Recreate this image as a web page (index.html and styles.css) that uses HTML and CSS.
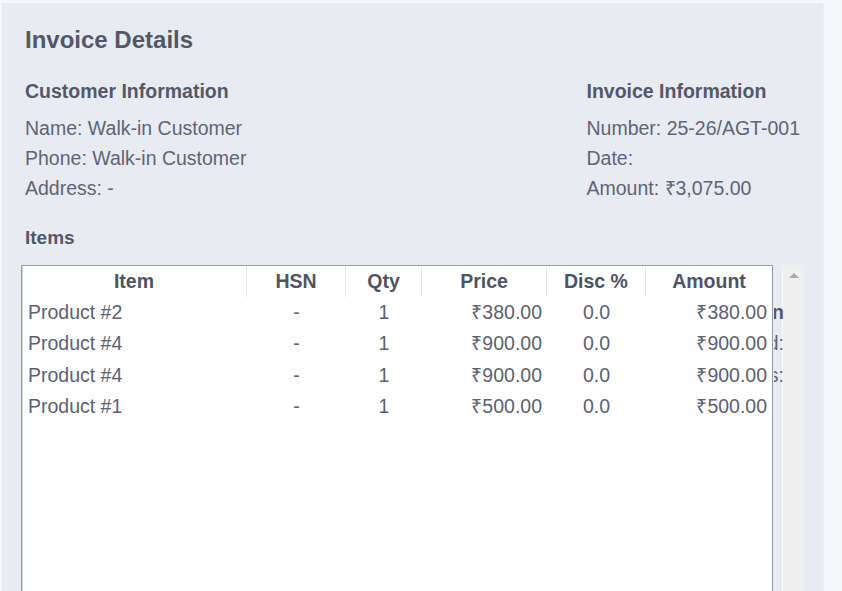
FILE: index.html
```html
<!DOCTYPE html>
<html>
<head>
<meta charset="utf-8">
<link rel="stylesheet" href="styles.css">
</head>
<body>
<div class="panel">
  <h1 class="title">Invoice Details</h1>
  <div class="info">
    <div class="col">
      <h2 class="sub">Customer Information</h2>
      <div class="line">Name: Walk-in Customer</div>
      <div class="line">Phone: Walk-in Customer</div>
      <div class="line">Address: -</div>
    </div>
    <div class="col">
      <h2 class="sub">Invoice Information</h2>
      <div class="line">Number: 25-26/AGT-001</div>
      <div class="line">Date:</div>
      <div class="line">Amount: ₹3,075.00</div>
    </div>
  </div>
  <h3 class="items-label">Items</h3>
  <div class="table-area">
    <div class="spill">
      <div class="spill-line bold"><span>Information</span></div>
      <div class="spill-line"><span>Paid:</span></div>
      <div class="spill-line"><span>Status:</span></div>
    </div>
    <div class="frame">
      <table class="grid">
        <colgroup>
          <col class="c-item"><col class="c-hsn"><col class="c-qty"><col class="c-price"><col class="c-disc"><col class="c-amt">
        </colgroup>
        <thead>
          <tr><th>Item</th><th>HSN</th><th>Qty</th><th>Price</th><th>Disc %</th><th class="last">Amount</th></tr>
        </thead>
        <tbody>
          <tr><td class="l">Product #2</td><td class="c">-</td><td class="c">1</td><td class="r">₹380.00</td><td class="c">0.0</td><td class="r">₹380.00</td></tr>
          <tr><td class="l">Product #4</td><td class="c">-</td><td class="c">1</td><td class="r">₹900.00</td><td class="c">0.0</td><td class="r">₹900.00</td></tr>
          <tr><td class="l">Product #4</td><td class="c">-</td><td class="c">1</td><td class="r">₹900.00</td><td class="c">0.0</td><td class="r">₹900.00</td></tr>
          <tr><td class="l">Product #1</td><td class="c">-</td><td class="c">1</td><td class="r">₹500.00</td><td class="c">0.0</td><td class="r">₹500.00</td></tr>
        </tbody>
      </table>
    </div>
    <div class="scrollbar">
      <svg class="arrow" width="10" height="7" viewBox="0 0 10 7"><polygon points="0,6 5,1 10,6" fill="#a9a9ad"/></svg>
    </div>
  </div>
</div>
</body>
</html>
```
FILE: styles.css
```css
html, body {
  margin: 0;
  padding: 0;
  height: 100%;
  overflow: hidden;
}
body {
  background: #f6f7fb;
  font-family: "Liberation Sans", Arial, sans-serif;
  color: #5f6476;
}
.panel {
  margin: 3px 0 0 2px;
  width: 822px;
  height: 600px;
  box-sizing: border-box;
  background: #e8ebf2;
  border-right: 1px solid #eef0f5;
  padding: 22px 19px 0 19px;
  overflow: hidden;
}
.title {
  margin: 0 0 21px 4px;
  font-size: 24px;
  line-height: 30px;
  font-weight: bold;
  color: #525767;
}
.info {
  display: flex;
  justify-content: space-between;
  padding-left: 4px;
  padding-right: 4px;
}
.sub {
  margin: 0 0 7px 0;
  font-size: 19.5px;
  line-height: 30px;
  font-weight: bold;
  color: #535869;
}
.line {
  font-size: 19.5px;
  line-height: 30px;
}
.items-label {
  margin: 20px 0 12px 4px;
  font-size: 19px;
  line-height: 30px;
  font-weight: bold;
  color: #535869;
}
.table-area {
  position: relative;
  display: flex;
  height: 400px;
}
.frame {
  position: relative;
  z-index: 1;
  width: 753px;
  box-sizing: border-box;
  background: #fff;
  border: 1px solid #9a9ca5;
  border-bottom: none;
  box-shadow: inset 1px 0 0 #d4d5da;
}
.grid {
  width: 100%;
  table-layout: fixed;
  border-collapse: separate;
  border-spacing: 0;
  font-size: 19.5px;
}
.c-item { width: 225px; }
.c-hsn { width: 99px; }
.c-qty { width: 76px; }
.c-price { width: 125px; }
.c-disc { width: 99px; }
.grid th {
  height: 28px;
  padding: 0 0 2px 0;
  vertical-align: top;
  font-weight: bold;
  text-align: center;
  color: #4f5465;
  line-height: 28px;
  border-right: 1px solid #e5e6ea;
  border-top: 1px solid #fff;
}
.grid th.last { border-right: none; }
.grid td {
  height: 31.3px;
  line-height: 31.3px;
  padding: 0;
  color: #5c6173;
  white-space: nowrap;
}
.grid td.l { text-align: left; padding-left: 6px; }
.grid td.c { text-align: center; }
.grid td.r { text-align: right; padding-right: 5px; }
.spill {
  position: absolute;
  left: 753px;
  top: 32px;
  width: 10px;
  overflow: hidden;
  font-size: 19.5px;
  color: #5f6476;
}
.spill-line {
  height: 31.3px;
  line-height: 31.3px;
  display: flex;
  justify-content: flex-end;
  white-space: nowrap;
}
.spill-line.bold { font-weight: bold; color: #535869; }
.scrollbar {
  margin-left: 9px;
  width: 21px;
  border-left: 1px solid #fafafa;
  background: #efefef;
  display: flex;
  justify-content: center;
  align-items: flex-start;
  padding-top: 7px;
  box-sizing: content-box;
}
.arrow { display: block; }
```
